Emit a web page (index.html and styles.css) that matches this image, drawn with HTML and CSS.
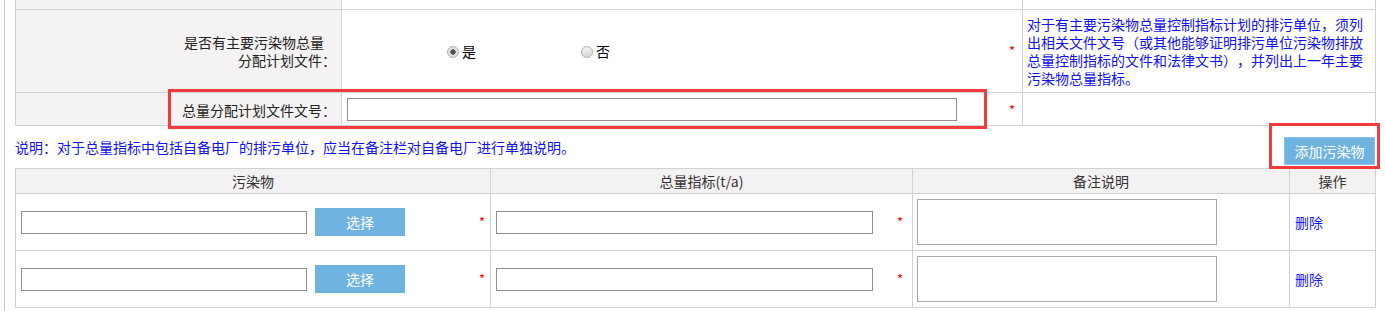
FILE: index.html
```html
<!DOCTYPE html>
<html lang="zh-CN">
<head>
  <meta charset="UTF-8" />
  <meta name="viewport" content="width=device-width, initial-scale=1.0" />
  <title>主要污染物总量控制</title>
  <link rel="stylesheet" href="styles.css">
</head>
<body>

<div class="page">
  <table class="form-table">
    <colgroup>
      <col class="c-label">
      <col class="c-field">
      <col class="c-desc">
    </colgroup>
    <tr class="row-cut">
      <th class="label"></th>
      <td class="field"></td>
      <td class="desc">应与排污单位环境影响评价批复文件中的内容相符。</td>
    </tr>
    <tr>
      <th class="label"><span class="l1">是否有主要污染物总量</span><br>分配计划文件：</th>
      <td class="field">
        <div class="field-line">
          <div class="radios">
            <label class="opt"><input type="radio" name="plan" checked>是</label>
            <label class="opt"><input type="radio" name="plan">否</label>
          </div>
          <span class="req">*</span>
        </div>
      </td>
      <td class="desc">对于有主要污染物总量控制指标计划的排污单位，须列出相关文件文号（或其他能够证明排污单位污染物排放总量控制指标的文件和法律文书），并列出上一年主要污染物总量指标。</td>
    </tr>
    <tr class="row-input">
      <th class="label">总量分配计划文件文号：</th>
      <td class="field">
        <div class="field-line">
          <input type="text" class="txt doc-no" id="docNo" />
          <span class="req">*</span>
        </div>
      </td>
      <td class="desc"></td>
    </tr>
  </table>

  <div class="note-bar">
    <p class="note">说明：对于总量指标中包括自备电厂的排污单位，应当在备注栏对自备电厂进行单独说明。</p>
    <button class="btn add-btn">添加污染物</button>
  </div>

  <table class="list-table">
    <colgroup>
      <col class="c-name">
      <col class="c-amount">
      <col class="c-memo">
      <col class="c-op">
    </colgroup>
    <tr>
      <th>污染物</th>
      <th>总量指标(t/a)</th>
      <th>备注说明</th>
      <th>操作</th>
    </tr>
    <tr>
      <td>
        <div class="cell-line">
          <input type="text" class="txt pol-name" />
          <button class="btn pick-btn">选择</button>
          <span class="req">*</span>
        </div>
      </td>
      <td>
        <div class="cell-line">
          <input type="text" class="txt amount" />
          <span class="req">*</span>
        </div>
      </td>
      <td class="memo"><textarea></textarea></td>
      <td class="op"><a href="#">删除</a></td>
    </tr>
    <tr>
      <td>
        <div class="cell-line">
          <input type="text" class="txt pol-name" />
          <button class="btn pick-btn">选择</button>
          <span class="req">*</span>
        </div>
      </td>
      <td>
        <div class="cell-line">
          <input type="text" class="txt amount" />
          <span class="req">*</span>
        </div>
      </td>
      <td class="memo"><textarea></textarea></td>
      <td class="op"><a href="#">删除</a></td>
    </tr>
  </table>

  <!-- highlight frames -->
  <div class="mark mark-docno"></div>
  <div class="mark mark-add"></div>
</div>

</body>
</html>
```

FILE: styles.css
```css
body {
  font-family: "Noto Sans CJK SC", "Microsoft YaHei", sans-serif;
  font-size: 14px;
  line-height: 18px;
  color: #333;
  background-color: white;
  margin: 0;
  padding: 0;
  text-spacing-trim: space-all;
}

.page {
  position: relative;
  width: 1360px;
  margin: -20px 0 0 4px;
  padding: 0 0 10px 10px;
  border-left: 1px solid #cbcbcb;
}

table {
  border-collapse: collapse;
  table-layout: fixed;
  width: 1360px;
}

th,
td {
  border: 1px solid #d2d2d2;
  padding: 5px;
}

/* top form */
.c-label { width: 326px; }
.c-field { width: 681px; }
.c-desc { width: 353px; }

.form-table .label {
  background: #f4f2f2;
  font-weight: normal;
  text-align: right;
  color: #222;
}

.l1 {
  margin-right: 12px;
}

.form-table .desc {
  padding: 5px 4px;
  color: #1010f0;
}

.row-cut td,
.row-cut th {
  height: 18px;
}

.form-table .row-cut .desc {
  padding: 2px 4px 8px;
}

.row-input th,
.row-input td {
  padding: 5px 5px 4px;
}

.field-line {
  display: flex;
  align-items: center;
}

.radios {
  display: flex;
  margin-left: 100px;
  color: #000;
}

.opt {
  width: 134px;
}

.opt input {
  appearance: none;
  width: 12px;
  height: 12px;
  margin: 0 3px 0 0;
  border: 1px solid #b4b4b4;
  border-radius: 50%;
  background: linear-gradient(#f2f2f2, #d6d6d6);
  vertical-align: -1px;
}

.opt input:checked {
  background: radial-gradient(circle, #505050 0 2.4px, #e4e4e4 3px, #d0d0d0 100%);
}

.req {
  margin-left: auto;
  margin-right: 2px;
  color: #f00;
  font-size: 13px;
}

.txt {
  box-sizing: border-box;
  height: 23px;
  border: 1px solid #8e8e8e;
  padding: 2px 4px;
  font-size: 14px;
  margin: 0;
}

.doc-no {
  width: 610px;
}

/* note + add button */
.note-bar {
  display: flex;
  justify-content: space-between;
  align-items: flex-start;
  height: 42px;
}

.note {
  margin: 12px 0 0;
  color: #1010f0;
}

.btn {
  font-family: inherit;
  font-size: 14px;
  color: white;
  background: #6fb3e0;
  border: none;
  cursor: pointer;
}

.add-btn {
  width: 91px;
  height: 28px;
  margin-top: 11px;
  border: 1px solid #86c1f2;
}

/* pollutant list */
.c-name { width: 475px; }
.c-amount { width: 422px; }
.c-memo { width: 377px; }
.c-op { width: 86px; }

.list-table th {
  background: #f3f1f1;
  font-weight: normal;
  padding: 3px 5px;
  color: #333;
}

.list-table td {
  height: 46px;
}

.cell-line {
  display: flex;
  align-items: center;
}

.cell-line .req {
  margin-right: 0;
}

.pol-name {
  width: 286px;
}

.pick-btn {
  width: 90px;
  height: 28px;
  margin-left: 8px;
}

.amount {
  width: 377px;
}

.amount + .req {
  margin-right: 4px;
}

.memo {
  padding: 5px 4px;
}

.memo textarea {
  box-sizing: border-box;
  display: block;
  width: 300px;
  height: 46px;
  border: 1px solid #a9a9a9;
  resize: none;
  margin: 0;
}

.op a {
  color: #1a1af0;
  text-decoration: none;
}

/* red highlight frames laid over the form */
.mark {
  position: absolute;
  box-sizing: border-box;
  border: 3px solid #f23c3c;
}

.mark-docno {
  left: 163px;
  top: 109px;
  width: 819px;
  height: 40px;
}

.mark-add {
  left: 1264px;
  top: 143px;
  width: 111px;
  height: 46px;
}
```
